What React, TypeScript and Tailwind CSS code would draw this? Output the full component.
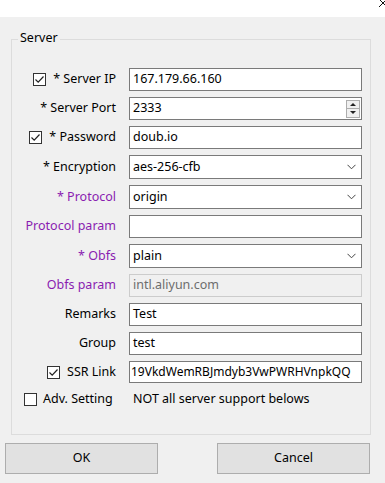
import React from 'react';

type Row = {
  label: string;
  kind: 'text' | 'combo' | 'spin' | 'disabled' | 'link';
  value: string;
  check?: boolean;
  purple?: boolean;
};

const rows: Row[] = [
  { label: '* Server IP', kind: 'text', value: '167.179.66.160', check: true },
  { label: '* Server Port', kind: 'spin', value: '2333' },
  { label: '* Password', kind: 'text', value: 'doub.io', check: true },
  { label: '* Encryption', kind: 'combo', value: 'aes-256-cfb' },
  { label: '* Protocol', kind: 'combo', value: 'origin', purple: true },
  { label: 'Protocol param', kind: 'text', value: '', purple: true },
  { label: '* Obfs', kind: 'combo', value: 'plain', purple: true },
  { label: 'Obfs param', kind: 'disabled', value: 'intl.aliyun.com', purple: true },
  { label: 'Remarks', kind: 'text', value: 'Test' },
  { label: 'Group', kind: 'text', value: 'test' },
  // the field is scrolled to its end; only the visible tail is shown
  { label: 'SSR Link', kind: 'link', value: '19VkdWemRBJmdyb3VwPWRHVnpkQQ', check: true },
];

function CheckBox({ checked }: { checked: boolean }) {
  return (
    <svg width="13" height="13" viewBox="0 0 13 13" className="shrink-0">
      <rect x="0.5" y="0.5" width="12" height="12" fill="#fff" stroke="#333" />
      {checked && <path d="M2.5 6.5 L5.2 9.2 L10.5 3.5" fill="none" stroke="#222" strokeWidth="1.2" />}
    </svg>
  );
}

function Field({ row }: { row: Row }) {
  if (row.kind === 'combo') {
    return (
      <div className="h-[24px] border border-[#7a7a7a] bg-white flex items-center pl-[3px] pr-[5px]">
        <span className="flex-1">{row.value}</span>
        <svg width="9" height="6" viewBox="0 0 9 6">
          <path d="M0.5 0.8 L4.5 4.8 L8.5 0.8" fill="none" stroke="#444" strokeWidth="1" />
        </svg>
      </div>
    );
  }
  if (row.kind === 'spin') {
    return (
      <div className="h-[23px] border border-[#7a7a7a] bg-white flex items-center pl-[3px] pr-[1px]">
        <span className="flex-1">{row.value}</span>
        <div className="flex flex-col w-[14px]">
          <div className="h-[9px] border border-[#adadad] bg-[#f0f0f0] flex items-center justify-center">
            <svg width="6" height="3" viewBox="0 0 6 3"><path d="M0 3 L3 0 L6 3 Z" fill="#222" /></svg>
          </div>
          <div className="h-[9px] border border-t-0 border-[#adadad] bg-[#f0f0f0] flex items-center justify-center">
            <svg width="6" height="3" viewBox="0 0 6 3"><path d="M0 0 L3 3 L6 0 Z" fill="#222" /></svg>
          </div>
        </div>
      </div>
    );
  }
  if (row.kind === 'disabled') {
    return (
      <div className="h-[23px] border border-[#cccccc] bg-[#f0f0f0] text-[#6d6d6d] flex items-center pl-[3px]">
        {row.value}
      </div>
    );
  }
  if (row.kind === 'link') {
    return (
      <div className="h-[22px] border border-[#7a7a7a] bg-white flex items-center overflow-hidden whitespace-nowrap pl-[1px] text-[12px]">
        {row.value}
      </div>
    );
  }
  return (
    <div className="h-[23px] border border-[#7a7a7a] bg-white flex items-center pl-[3px]">
      {row.value}
    </div>
  );
}

export default function App() {
  return (
    <div className="w-[385px] h-[483px] bg-[#f0f0f0] flex flex-col font-['Noto_Sans','Liberation_Sans',sans-serif] text-[12.5px] leading-none text-black overflow-hidden">
      {/* title strip */}
      <div className="h-[17px] bg-white relative shrink-0">
        <svg width="10" height="10" viewBox="0 0 10 10" className="absolute right-[-3px] top-[-2px]">
          <path d="M1 1 L9 9 M9 1 L1 9" stroke="#111" strokeWidth="1" />
        </svg>
      </div>

      {/* group box */}
      <div className="mt-[22px] ml-[11px] w-[360px] h-[396px] border border-[#dcdcdc] relative shrink-0">
        <span className="absolute top-[-8px] left-[6px] px-[2px] bg-[#f0f0f0]">Server</span>

        <div className="pt-[28px] flex flex-col gap-[6px]">
          {rows.map((row) => (
            <div key={row.label} className="grid grid-cols-[106px_233px] gap-x-[11px] items-center">
              <div className={`flex items-center justify-end gap-[7px] pr-[2px] ${row.purple ? 'text-[#8a1cb0]' : ''}`}>
                {row.check && <CheckBox checked />}
                <span>{row.label}</span>
              </div>
              <Field row={row} />
            </div>
          ))}
        </div>

        <div className="mt-[8px] h-[16px] flex items-center pl-[12px]">
          <CheckBox checked={false} />
          <span className="ml-[6px] w-[84px]">Adv. Setting</span>
          <span className="ml-[6px]">NOT all server support belows</span>
        </div>
      </div>

      {/* buttons */}
      <div className="mt-[8px] flex shrink-0">
        <button className="ml-[5px] w-[153px] h-[31px] bg-[#e1e1e1] border border-[#adadad]">OK</button>
        <button className="ml-[59px] w-[153px] h-[31px] bg-[#e1e1e1] border border-[#adadad]">Cancel</button>
      </div>
    </div>
  );
}
